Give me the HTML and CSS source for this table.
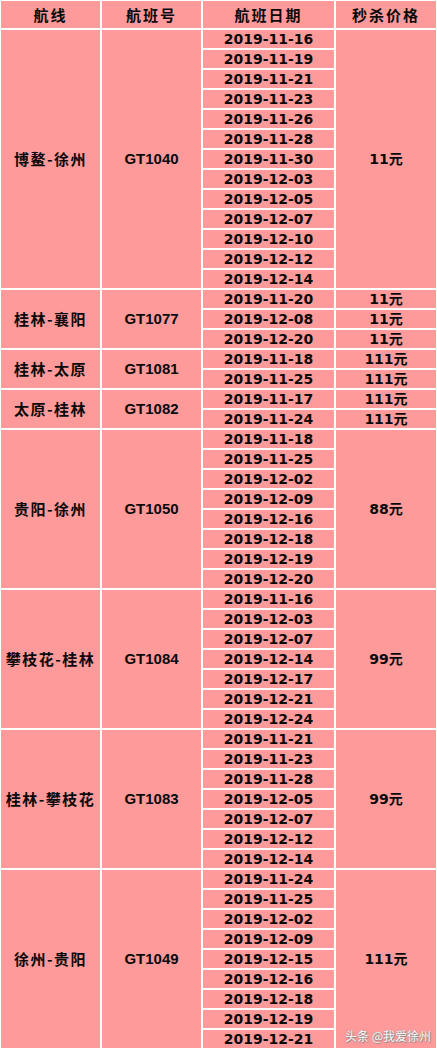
FILE: index.html
```html
<!DOCTYPE html>
<html lang="zh">
<head>
<meta charset="utf-8">
<title>航线秒杀价格</title>
<link rel="stylesheet" href="styles.css">
</head>
<body>
<div class="page">
<table class="fares">
<colgroup><col class="c1"><col class="c2"><col class="c3"><col class="c4"></colgroup>
<thead>
<tr><th>航线</th><th>航班号</th><th>航班日期</th><th>秒杀价格</th></tr>
</thead>
<tbody>
<tr><td class="route" rowspan="13">博鳌-徐州</td><td class="code" rowspan="13">GT1040</td><td class="date">2019-11-16</td><td class="price" rowspan="13">11元</td></tr>
<tr><td class="date">2019-11-19</td></tr>
<tr><td class="date">2019-11-21</td></tr>
<tr><td class="date">2019-11-23</td></tr>
<tr><td class="date">2019-11-26</td></tr>
<tr><td class="date">2019-11-28</td></tr>
<tr><td class="date">2019-11-30</td></tr>
<tr><td class="date">2019-12-03</td></tr>
<tr><td class="date">2019-12-05</td></tr>
<tr><td class="date">2019-12-07</td></tr>
<tr><td class="date">2019-12-10</td></tr>
<tr><td class="date">2019-12-12</td></tr>
<tr><td class="date">2019-12-14</td></tr>

<tr><td class="route" rowspan="3">桂林-襄阳</td><td class="code" rowspan="3">GT1077</td><td class="date">2019-11-20</td><td class="price">11元</td></tr>
<tr><td class="date">2019-12-08</td><td class="price">11元</td></tr>
<tr><td class="date">2019-12-20</td><td class="price">11元</td></tr>

<tr><td class="route" rowspan="2">桂林-太原</td><td class="code" rowspan="2">GT1081</td><td class="date">2019-11-18</td><td class="price">111元</td></tr>
<tr><td class="date">2019-11-25</td><td class="price">111元</td></tr>

<tr><td class="route" rowspan="2">太原-桂林</td><td class="code" rowspan="2">GT1082</td><td class="date">2019-11-17</td><td class="price">111元</td></tr>
<tr><td class="date">2019-11-24</td><td class="price">111元</td></tr>

<tr><td class="route" rowspan="8">贵阳-徐州</td><td class="code" rowspan="8">GT1050</td><td class="date">2019-11-18</td><td class="price" rowspan="8">88元</td></tr>
<tr><td class="date">2019-11-25</td></tr>
<tr><td class="date">2019-12-02</td></tr>
<tr><td class="date">2019-12-09</td></tr>
<tr><td class="date">2019-12-16</td></tr>
<tr><td class="date">2019-12-18</td></tr>
<tr><td class="date">2019-12-19</td></tr>
<tr><td class="date">2019-12-20</td></tr>

<tr><td class="route" rowspan="7">攀枝花-桂林</td><td class="code" rowspan="7">GT1084</td><td class="date">2019-11-16</td><td class="price" rowspan="7">99元</td></tr>
<tr><td class="date">2019-12-03</td></tr>
<tr><td class="date">2019-12-07</td></tr>
<tr><td class="date">2019-12-14</td></tr>
<tr><td class="date">2019-12-17</td></tr>
<tr><td class="date">2019-12-21</td></tr>
<tr><td class="date">2019-12-24</td></tr>

<tr><td class="route" rowspan="7">桂林-攀枝花</td><td class="code" rowspan="7">GT1083</td><td class="date">2019-11-21</td><td class="price" rowspan="7">99元</td></tr>
<tr><td class="date">2019-11-23</td></tr>
<tr><td class="date">2019-11-28</td></tr>
<tr><td class="date">2019-12-05</td></tr>
<tr><td class="date">2019-12-07</td></tr>
<tr><td class="date">2019-12-12</td></tr>
<tr><td class="date">2019-12-14</td></tr>

<tr><td class="route" rowspan="9">徐州-贵阳</td><td class="code" rowspan="9">GT1049</td><td class="date">2019-11-24</td><td class="price" rowspan="9">111元</td></tr>
<tr><td class="date">2019-11-25</td></tr>
<tr><td class="date">2019-12-02</td></tr>
<tr><td class="date">2019-12-09</td></tr>
<tr><td class="date">2019-12-15</td></tr>
<tr><td class="date">2019-12-16</td></tr>
<tr><td class="date">2019-12-18</td></tr>
<tr><td class="date">2019-12-19</td></tr>
<tr><td class="date">2019-12-21</td></tr>
</tbody>
</table>
<div class="watermark">头条 @我爱徐州</div>
</div>
</body>
</html>
```
FILE: styles.css
```css
html, body {
  margin: 0;
  padding: 0;
  background: #ffffff;
}
.page {
  position: relative;
  width: 437px;
  height: 1050px;
  overflow: hidden;
}
.fares {
  border-collapse: separate;
  border-spacing: 2px;
  margin: -1px 0 0 -1px;
  table-layout: fixed;
  width: 439px;
  color: #0a0a0a;
}
.c1 { width: 99px; }
.c2 { width: 99px; }
.c3 { width: 131px; }
.c4 { width: 100px; }
.fares th,
.fares td {
  background: #ff9a9a;
  padding: 0;
  text-align: center;
  vertical-align: middle;
  font-weight: 700;
  white-space: nowrap;
  overflow: hidden;
}
.fares th {
  height: 27px;
  font-family: "Noto Sans CJK SC", sans-serif;
  font-size: 15px;
  letter-spacing: 2px;
  line-height: 27px;
}
.fares td {
  height: 18px;
  line-height: 18px;
}
.route {
  font-family: "Noto Sans CJK SC", sans-serif;
  font-size: 15px;
  letter-spacing: 1.5px;
}
.code {
  font-family: "Liberation Sans", Arial, sans-serif;
  font-size: 15px;
}
.date {
  font-family: "DejaVu Sans", sans-serif;
  font-size: 14px;
}
.price {
  font-family: "DejaVu Sans", "Noto Sans CJK SC", sans-serif;
  font-size: 14px;
}
.watermark {
  position: absolute;
  left: 345px;
  top: 1027px;
  font-family: "Noto Sans CJK SC", sans-serif;
  font-size: 12px;
  color: #ffffff;
  text-shadow: 0 0 1px #777, 1px 1px 1px #888;
  white-space: nowrap;
}
```
